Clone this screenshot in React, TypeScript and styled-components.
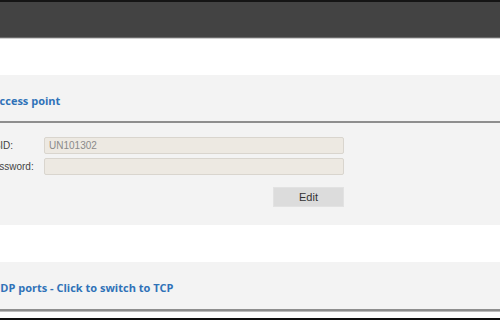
import React from "react";
import styled, { createGlobalStyle } from "styled-components";

const GlobalStyle = createGlobalStyle`
  html, body {
    margin: 0;
    padding: 0;
    background: #fff;
    overflow: hidden;
  }
  body {
    width: 500px;
    height: 320px;
    font-family: "Liberation Sans", Arial, sans-serif;
  }
`;

const Page = styled.div`
  width: 500px;
  height: 320px;
  overflow: hidden;
  display: flex;
  flex-direction: column;
`;

const TopBar = styled.header`
  height: 35px;
  background: #434343;
  border-top: 2px solid #151515;
  border-bottom: 1px solid #6a6a6a;
  box-shadow: 0 1px 0 #cfcfcf;
`;

const Content = styled.main`
  margin-left: -14px;
  padding-top: 37px;
  display: flex;
  flex-direction: column;
`;

const Panel = styled.section<{ $gap?: number }>`
  background: #f3f3f3;
  margin-bottom: ${(p) => p.$gap ?? 0}px;
`;

const Title = styled.h2<{ $height: number }>`
  margin: 0;
  height: ${(p) => p.$height}px;
  display: flex;
  align-items: center;
  padding: 4px 0 0 6px;
  box-sizing: border-box;
  font-family: "Open Sans", "Noto Sans", sans-serif;
  font-weight: 700;
  font-size: 11px;
  color: #2f72b8;
  border-bottom: 2px solid #8e8e8e;
`;

const Body = styled.div`
  padding: 14px 0 18px 1px;
  width: 357px;
  display: flex;
  flex-direction: column;
  gap: 4px;
`;

const Row = styled.div`
  display: flex;
  align-items: center;
`;

const Label = styled.label`
  width: 57px;
  font-size: 10px;
  color: #444;
`;

const Field = styled.div`
  flex: 1;
  height: 17px;
  box-sizing: border-box;
  background: #ede9e2;
  border: 1px solid #d9d5ce;
  border-radius: 2px;
  padding: 0 4px;
  font-size: 10px;
  line-height: 15px;
  color: #8a8a8a;
`;

const Actions = styled.div`
  display: flex;
  justify-content: flex-end;
  padding-top: 8px;
`;

const Button = styled.button`
  width: 71px;
  height: 20px;
  background: #dcdcdc;
  border: 1px solid #e2e2e2;
  font-family: "Liberation Sans", Arial, sans-serif;
  font-size: 11px;
  color: #333;
  padding: 0;
`;

const Bottom = styled.div`
  height: 6px;
  background: #fff;
  border-top: 1px solid #bdbdbd;
  border-bottom: 2px solid #111;
`;

export default function App() {
  return (
    <>
      <GlobalStyle />
      <Page>
        <TopBar />
        <Content>
          <Panel $gap={37}>
            <Title $height={48}>Access point</Title>
            <Body>
              <Row>
                <Label>SSID:</Label>
                <Field>UN101302</Field>
              </Row>
              <Row>
                <Label>Password:</Label>
                <Field />
              </Row>
              <Actions>
                <Button>Edit</Button>
              </Actions>
            </Body>
          </Panel>
          <Panel>
            <Title $height={49}>UDP ports - Click to switch to TCP</Title>
          </Panel>
          <Bottom />
        </Content>
      </Page>
    </>
  );
}
